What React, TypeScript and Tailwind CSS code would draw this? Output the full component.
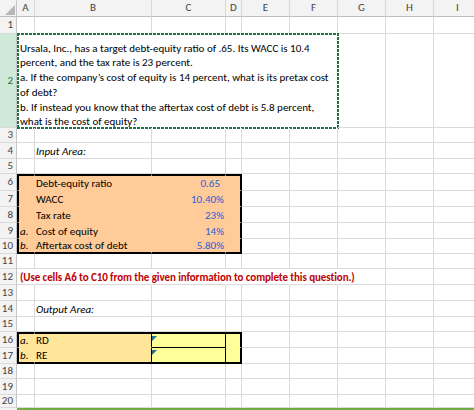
import React from 'react';

type Edge = 'grid' | 'none' | 'thin' | 'thick';
type Kind = 'label' | 'italic' | 'num' | 'note';

type Cell = {
  text?: string;
  kind?: Kind;
  fill?: 'peach' | 'gold' | 'yellow';
  r?: Edge;
  b?: Edge;
  t?: boolean; // thick top edge
  l?: boolean; // thick left edge
  flag?: boolean; // little indicator in the top-left corner
  pad?: boolean; // extra right padding (number format)
};

const COLS = ['A', 'B', 'C', 'D', 'E', 'F', 'G', 'H', 'I'];

const rightCls: Record<Edge, string> = {
  grid: 'border-r border-r-[#dadada]',
  none: 'border-r border-r-transparent',
  thin: 'border-r border-r-black',
  thick: 'border-r-2 border-r-black',
};

const bottomCls: Record<Edge, string> = {
  grid: 'border-b border-b-[#dadada]',
  none: 'border-b border-b-transparent',
  thin: 'border-b border-b-black',
  thick: 'border-b-2 border-b-black',
};

const fillCls = {
  peach: 'bg-[#ffcc99]',
  gold: 'bg-[#ffe699]',
  yellow: 'bg-[#ffff99]',
};

const kindCls: Record<Kind, string> = {
  label: 'justify-start pl-[1px]',
  italic: 'justify-start pl-[1px] italic',
  num: 'justify-end pr-[1px] text-[#2a5fd6]',
  note: 'justify-start pl-[3px] font-bold tracking-[-0.08px] text-[#c00000]',
};

// input block A6:D10
const inputRows: [string, string, string][] = [
  ['', 'Debt-equity ratio', '0.65'],
  ['', 'WACC', '10.40%'],
  ['', 'Tax rate', '23%'],
  ['a.', 'Cost of equity', '14%'],
  ['b.', 'Aftertax cost of debt', '5.80%'],
];

const buildSheet = () => {
  const sheet: Record<number, Record<string, Cell>> = {};
  const put = (row: number, col: string, cell: Cell) => {
    sheet[row] = sheet[row] || {};
    sheet[row][col] = cell;
  };

  put(4, 'B', { text: 'Input Area:', kind: 'italic' });

  inputRows.forEach(([a, label, value], i) => {
    const row = 6 + i;
    const last = i === inputRows.length - 1;
    const base = { fill: 'peach' as const, t: i === 0, b: (last ? 'thick' : 'none') as Edge };
    put(row, 'A', { ...base, l: true, r: 'none', text: a, kind: 'italic' });
    put(row, 'B', { ...base, r: 'none', text: label, kind: 'label' });
    put(row, 'C', { ...base, r: 'none', text: value, kind: 'num', pad: value === '0.65' });
    put(row, 'D', { ...base, r: 'thick' });
  });

  ['A', 'B', 'C', 'D', 'E', 'F'].forEach((c) => put(12, c, { r: 'none' }));
  sheet[12].A = {
    r: 'none',
    kind: 'note',
    text: '(Use cells A6 to C10 from the given information to complete this question.)',
  };

  put(14, 'B', { text: 'Output Area:', kind: 'italic' });

  // output block A16:D17
  [
    ['a.', 'RD'],
    ['b.', 'RE'],
  ].forEach(([a, label], i) => {
    const row = 16 + i;
    const top = i === 0;
    const bEdge: Edge = top ? 'none' : 'thick';
    put(row, 'A', { fill: 'gold', t: top, l: true, r: 'none', b: bEdge, text: a, kind: 'italic' });
    put(row, 'B', { fill: 'gold', t: top, r: 'thin', b: bEdge, text: label, kind: 'label' });
    put(row, 'C', { fill: 'yellow', t: top, r: 'thin', b: top ? 'thin' : 'thick', flag: true });
    put(row, 'D', { fill: 'yellow', t: top, r: 'thick', b: bEdge });
  });

  return sheet;
};

const sheet = buildSheet();

const problemLines = [
  'Ursala, Inc., has a target debt-equity ratio of .65. Its WACC is 10.4',
  'percent, and the tax rate is 23 percent.',
  'a. If the company\u2019s cost of equity is 14 percent, what is its pretax cost',
  'of debt?',
  'b. If instead you know that the aftertax cost of debt is 5.8 percent,',
  'what is the cost of equity?',
];

const SheetCell = ({ cell }: { cell?: Cell }) => {
  const c = cell || {};
  const classes = [
    'relative flex items-end whitespace-nowrap leading-[13px]',
    rightCls[c.r || 'grid'],
    bottomCls[c.b || 'grid'],
    c.t ? 'border-t-2 border-t-black' : '',
    c.l ? 'border-l-2 border-l-black' : '',
    c.fill ? fillCls[c.fill] : '',
    c.kind ? kindCls[c.kind] : '',
    c.pad ? 'pr-[5px]' : '',
  ].join(' ');

  return (
    <div className={classes}>
      {c.flag && (
        <svg className="absolute left-0 top-[2px]" width="5" height="5" viewBox="0 0 5 5">
          <polygon points="0,0 5,0 0,5" fill="#23708f" />
        </svg>
      )}
      {c.text && <span>{c.text}</span>}
    </div>
  );
};

const RowHeader = ({ n, selected }: { n: number; selected?: boolean }) => (
  <div
    className={`flex items-center justify-end pr-[3px] pt-[1px] border-r border-r-[#c6c6c6] border-b border-b-[#dadada] ${
      selected ? 'bg-[#cfe9d9] text-[#217346]' : 'bg-[#f3f3f3] text-[#444]'
    }`}
  >
    {n}
  </div>
);

// copy marquee: short green dashes round the merged cell
const Marquee = () => (
  <>
    <div className="absolute left-0 right-0 top-0 h-[2px] bg-[repeating-linear-gradient(90deg,#217346_0_3px,transparent_3px_4px)]" />
    <div className="absolute left-0 right-0 bottom-0 h-[2px] bg-[repeating-linear-gradient(90deg,#217346_0_3px,transparent_3px_4px)]" />
    <div className="absolute top-0 bottom-0 left-0 w-[2px] bg-[repeating-linear-gradient(180deg,#217346_0_3px,transparent_3px_4px)]" />
    <div className="absolute top-0 bottom-0 right-0 w-[2px] bg-[repeating-linear-gradient(180deg,#217346_0_3px,transparent_3px_4px)]" />
  </>
);

export default function App() {
  const rows = Array.from({ length: 20 }, (_, i) => i + 1);

  return (
    <div className="w-[474px] h-[410px] overflow-hidden bg-white font-['Carlito','Lato',sans-serif] text-[11px] text-black">
      <div className="grid grid-cols-[17px_18px_117px_74px_16px_48px_48px_48px_48px_48px] grid-rows-[17px_17px_94px_15px_16px_15px_17px_16px_16px_16px_15px_15px_16px_16px_16px_15px_16px_16px_15px_16px_13px]">
        {/* corner */}
        <div className="flex items-end justify-end border-r border-r-[#c6c6c6] border-b border-b-[#bdbdbd] bg-[#f3f3f3] pb-[1px] pr-[1px]">
          <svg width="10" height="10" viewBox="0 0 10 10">
            <polygon points="10,0 10,10 0,10" fill="#b8b8b8" />
          </svg>
        </div>
        {COLS.map((c) => (
          <div
            key={c}
            className="flex items-center justify-center pt-[1px] border-r border-r-[#d8d8d8] border-b border-b-[#bdbdbd] bg-[#f3f3f3] text-[#444]"
          >
            {c}
          </div>
        ))}

        {rows.map((n) => (
          <React.Fragment key={n}>
            <RowHeader n={n} selected={n === 2} />
            {n === 2 ? (
              <>
                <div className="relative col-span-6 -mt-px -mr-px -mb-px flex flex-col justify-end bg-white pl-[3px] pb-[1px] leading-[14.7px]">
                  <div className="translate-y-[2px]">
                    {problemLines.map((line) => (
                      <div key={line} className="whitespace-nowrap">
                        {line}
                      </div>
                    ))}
                  </div>
                  <Marquee />
                </div>
                <SheetCell />
                <SheetCell />
                <SheetCell />
              </>
            ) : (
              COLS.map((c) => <SheetCell key={c} cell={sheet[n]?.[c]} />)
            )}
          </React.Fragment>
        ))}
      </div>
      <div className="flex h-[2px]">
        <div className="w-[17px] bg-[#f3f3f3]" />
        <div className="flex-1 bg-[#70ad47]" />
      </div>
    </div>
  );
}
